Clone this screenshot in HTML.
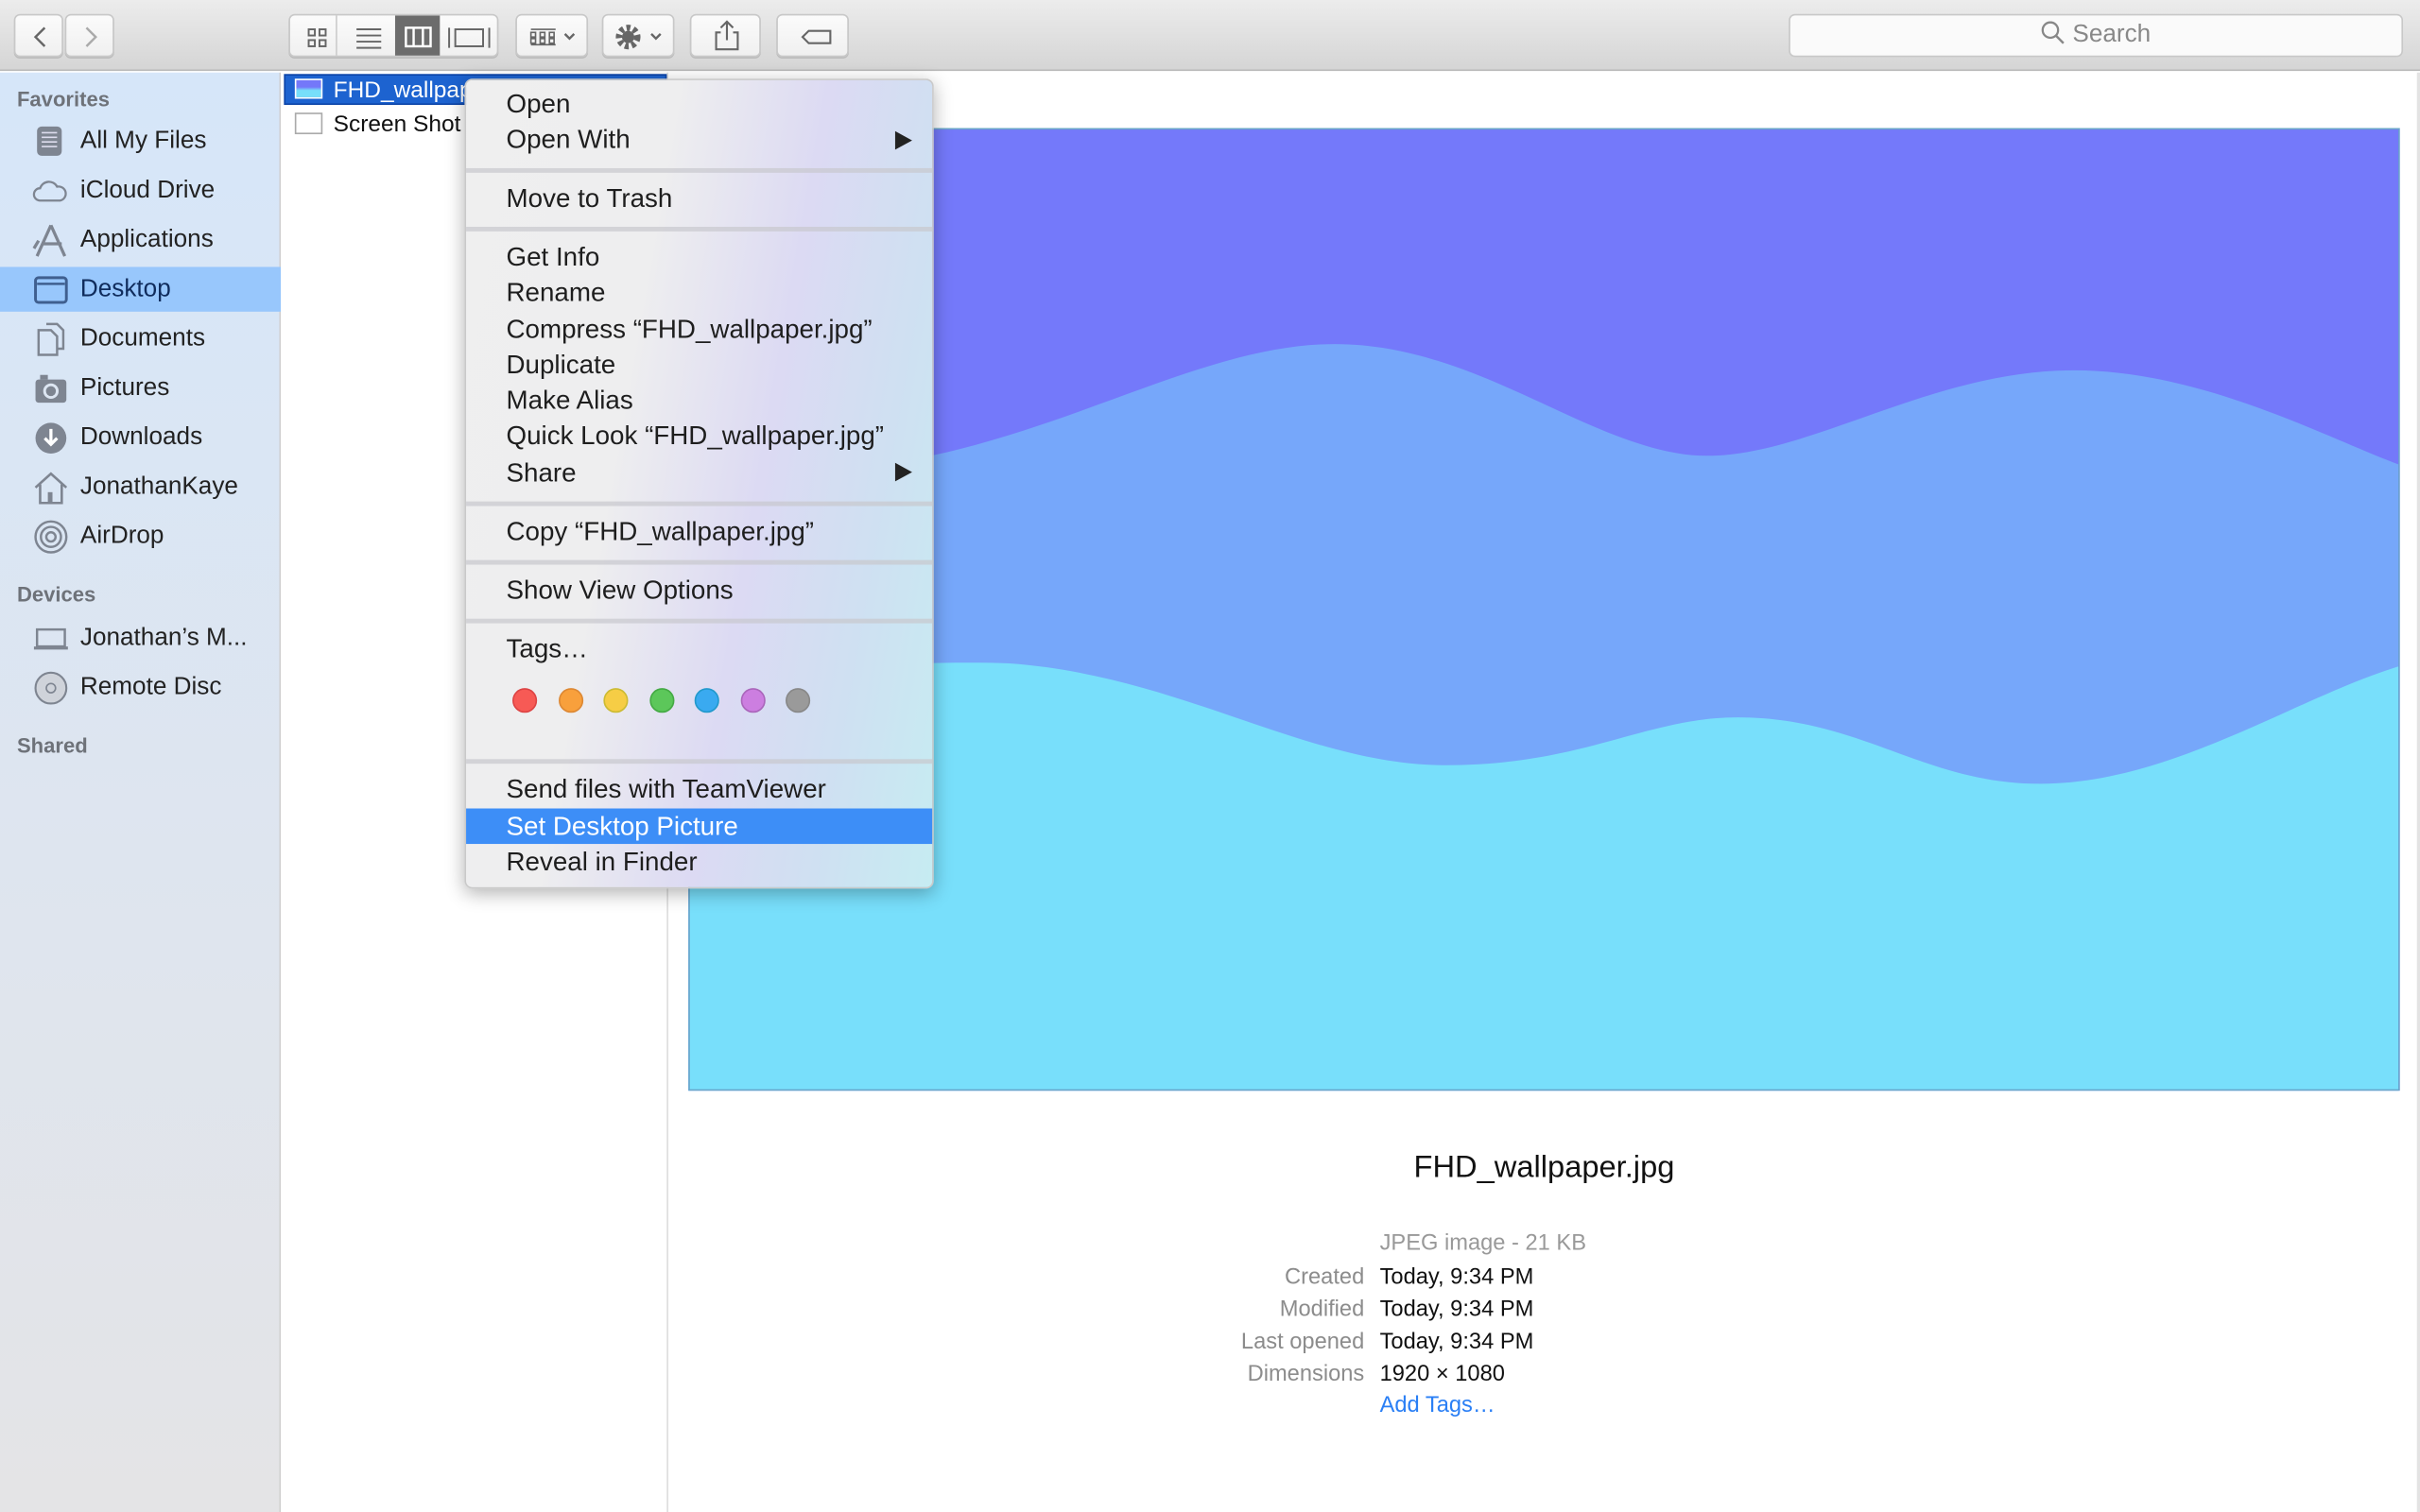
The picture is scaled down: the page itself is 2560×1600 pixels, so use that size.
<!DOCTYPE html>
<html><head><meta charset="utf-8"><style>
*{margin:0;padding:0;box-sizing:border-box}
html,body{width:2560px;height:1600px;overflow:hidden;background:#fff}
#w{width:1568px;height:980px;transform:scale(1.632653);transform-origin:0 0;position:relative;font-family:"Liberation Sans",sans-serif;color:#222}
.tb{position:absolute;left:0;top:0;width:1568px;height:46px;background:linear-gradient(#ececec,#d5d5d5);border-bottom:1px solid #b9b9b9}
.btn{position:absolute;top:9px;height:28px;background:linear-gradient(#fbfbfb,#f0f0f0);border:1px solid #c8c8c8;border-radius:4px;box-shadow:0 1px 0 #bbb}
.side{position:absolute;left:0;top:47px;width:182px;height:933px;background:linear-gradient(#d6e6f9,#dfe5ee 60%,#e4e4e6);border-right:1px solid #cfcfcf}
.sh{position:absolute;left:11px;font-size:13.5px;color:#6e7279;font-weight:bold}
.si{position:absolute;left:0;width:182px;height:29px;font-size:16px;line-height:29px;padding-left:52px;color:#222}
.si svg{position:absolute;left:21px;top:4px}
.col{position:absolute;left:182px;top:47px;width:251px;height:933px;border-right:1px solid #ddd;background:#fff}
.menu{position:absolute;left:301px;top:51px;width:304px;height:525px;border-radius:5px;background:linear-gradient(100deg,#efefef 0%,#eeeeef 35%,#dcdaf3 60%,#cfe0f2 80%,#c6ecf2 100%);box-shadow:0 3px 12px rgba(0,0,0,.3);border:1px solid #c9c9c9}
.mi{position:absolute;left:26px;font-size:17px;color:#1e1e1e;line-height:22px}
.sep{position:absolute;left:0;width:302px;height:3px;background:rgba(200,200,205,.7)}
.dot{position:absolute;top:394px;width:16px;height:16px;border-radius:50%}
.lab{position:absolute;font-size:14.5px;color:#8c8c8c;text-align:right;width:120px;left:764px}
.val{position:absolute;font-size:14.5px;color:#111;left:894px}
</style></head><body><div id="w">
<div class="tb">
 <div class="btn" style="left:9px;width:32px"><svg width="32" height="28"><path d="M19 8l-6 6 6 6" stroke="#666" stroke-width="1.5" fill="none"/></svg></div>
 <div class="btn" style="left:42px;width:32px"><svg width="32" height="28"><path d="M13 8l6 6-6 6" stroke="#aaa" stroke-width="1.5" fill="none"/></svg></div>
 <div class="btn" style="left:187px;width:136px;overflow:hidden">
  <svg width="136" height="28"><g fill="none" stroke="#666" stroke-width="1.2"><rect x="12" y="9" width="4" height="4"/><rect x="19" y="9" width="4" height="4"/><rect x="12" y="16" width="4" height="4"/><rect x="19" y="16" width="4" height="4"/><path d="M43 9h16M43 13h16M43 17h16M43 21h16"/><path d="M103 8v13M129 8v13"/><rect x="107" y="9" width="18" height="11"/></g><line x1="30" y1="0" x2="30" y2="28" stroke="#ccc"/><rect x="68" y="0" width="29" height="28" fill="#6c6c6c"/><g stroke="#fff" fill="none" stroke-width="1.5"><rect x="75" y="8" width="16" height="12"/><path d="M80 8v12M86 8v12"/></g></svg></div>
 <div class="btn" style="left:334px;width:47px"><svg width="47" height="28"><g stroke="#666" fill="none"><path d="M9 9h16M9 19h16"/><rect x="9" y="11" width="3" height="3"/><rect x="15" y="11" width="3" height="3"/><rect x="21" y="11" width="3" height="3"/><rect x="9" y="15" width="3" height="3"/><rect x="15" y="15" width="3" height="3"/><rect x="21" y="15" width="3" height="3"/><path d="M31 12l3 3 3-3" stroke-width="1.5"/></g></svg></div>
 <div class="btn" style="left:390px;width:47px"><svg width="47" height="28"><circle cx="16" cy="14" r="6" fill="none" stroke="#666" stroke-width="4" stroke-dasharray="2.5 2"/><circle cx="16" cy="14" r="4" fill="#666"/><path d="M31 12l3 3 3-3" stroke="#666" stroke-width="1.5" fill="none"/></svg></div>
 <div class="btn" style="left:447px;width:46px"><svg width="46" height="28"><path d="M19 11h-3v11h14V11h-3M23 4v12M19 8l4-4 4 4" stroke="#666" stroke-width="1.3" fill="none"/></svg></div>
 <div class="btn" style="left:503px;width:47px"><svg width="47" height="28"><path d="M16 14l4-4h14v8H20z" stroke="#666" stroke-width="1.3" fill="none"/></svg></div>
 <div class="btn" style="left:1159px;width:398px;background:#fafafa;box-shadow:none;font-size:16px;color:#888;text-align:center;line-height:26px"><svg width="16" height="16" style="vertical-align:-2px"><circle cx="6.5" cy="6.5" r="5" stroke="#888" stroke-width="1.4" fill="none"/><path d="M10 10l5 5" stroke="#888" stroke-width="1.5"/></svg> Search</div>
</div>
<div class="side">
 <div class="sh" style="top:10px">Favorites</div>
 <div class="si" style="top:30px"><svg width="24" height="22"><rect x="3" y="1" width="16" height="19" rx="3" fill="#7e8591"/><path d="M6 5h10M6 8h10M6 11h10M6 14h10" stroke="#dde" stroke-width="1"/></svg>All My Files</div>
 <div class="si" style="top:62px"><svg width="24" height="22"><path d="M5 17a4 4 0 010-8 6 6 0 0111-1 4.5 4.5 0 012 9z" fill="none" stroke="#7e8591" stroke-width="1.4"/></svg>iCloud Drive</div>
 <div class="si" style="top:94px"><svg width="24" height="22"><path d="M12 1L3 21M12 1l9 20M6 13h13M1 16l3-5" stroke="#7e8591" stroke-width="2" fill="none"/></svg>Applications</div>
 <div class="si" style="top:126px;background:#98c7fc;color:#102c5c"><svg width="24" height="22"><rect x="2" y="3" width="20" height="16" rx="2" fill="none" stroke="#3f5f8f" stroke-width="1.8"/><path d="M3 7h18" stroke="#3f5f8f" stroke-width="1.5"/></svg>Desktop</div>
 <div class="si" style="top:158px"><svg width="24" height="22"><path d="M4 5h8l4 4v12H4z M9 1h7l4 4v12h-4" fill="none" stroke="#7e8591" stroke-width="1.5"/></svg>Documents</div>
 <div class="si" style="top:190px"><svg width="24" height="22"><rect x="2" y="5" width="20" height="15" rx="2" fill="#7e8591"/><circle cx="12" cy="12.5" r="5" fill="#dde6f2"/><circle cx="12" cy="12.5" r="3.2" fill="#7e8591"/><rect x="5" y="2" width="5" height="3" fill="#7e8591"/></svg>Pictures</div>
 <div class="si" style="top:222px"><svg width="24" height="22"><circle cx="12" cy="11" r="10" fill="#7e8591"/><path d="M12 5v10M8 11l4 4 4-4" stroke="#fff" stroke-width="2" fill="none"/></svg>Downloads</div>
 <div class="si" style="top:254px"><svg width="24" height="22"><path d="M2 11L12 2l10 9M5 9v12h14V9" fill="none" stroke="#7e8591" stroke-width="1.6"/><rect x="10" y="14" width="3" height="7" fill="#7e8591"/></svg>JonathanKaye</div>
 <div class="si" style="top:286px"><svg width="24" height="22"><g fill="none" stroke="#7e8591" stroke-width="1.5"><circle cx="12" cy="11" r="10"/><circle cx="12" cy="11" r="6.5"/><circle cx="12" cy="11" r="3"/></g></svg>AirDrop</div>
 <div class="sh" style="top:331px">Devices</div>
 <div class="si" style="top:352px"><svg width="24" height="22"><rect x="3" y="5" width="18" height="11" fill="none" stroke="#7e8591" stroke-width="1.5"/><path d="M1 17h22" stroke="#7e8591" stroke-width="2"/></svg>Jonathan’s M...</div>
 <div class="si" style="top:384px"><svg width="24" height="22"><circle cx="12" cy="11" r="10" fill="#cfd3da" stroke="#7e8591" stroke-width="1.3"/><circle cx="12" cy="11" r="3" fill="none" stroke="#7e8591"/></svg>Remote Disc</div>
 <div class="sh" style="top:429px">Shared</div>
</div>
<div class="col">
 <div style="position:absolute;left:2px;top:1px;width:248px;height:20px;background:#1d63d0;border:1px solid #0d45a8"></div>
 <div style="position:absolute;left:9px;top:4px;width:18px;height:13px;background:linear-gradient(#7478f9 40%,#77dffa 60%);border:1px solid #fff"></div>
 <div style="position:absolute;left:34px;top:3px;font-size:15px;color:#fff">FHD_wallpaper.jpg</div>
 <div style="position:absolute;left:9px;top:26px;width:18px;height:14px;border:1px solid #aaa;background:#fff"></div>
 <div style="position:absolute;left:34px;top:25px;font-size:15px;color:#111">Screen Shot</div>
</div>
<svg style="position:absolute;left:446px;top:83px" width="1109" height="624" viewBox="0 0 1109 624">
 <rect width="1109" height="624" fill="#7479fa"/>
 <path d="M0 250C60 235 110 215 159 212C260 190 340 140 419 140C510 140 580 205 650 212C720 218 800 157 898 157C980 157 1060 200 1108 218V624H0Z" fill="#76a7fa"/>
 <path d="M0 350C100 350 160 345 208 347C320 355 400 413 491 413C580 413 620 382 680 382C760 382 800 425 876 425C960 425 1040 370 1108 349V624H0Z" fill="#78dffb"/>
 <rect x=".5" y=".5" width="1108" height="623" fill="none" stroke="#6aa5c8"/>
</svg>
<div class="menu">
 <div class="mi" style="top:5px">Open</div>
 <div class="mi" style="top:28px">Open With</div>
 <div style="position:absolute;left:278px;top:33px;border-left:11px solid #222;border-top:6px solid transparent;border-bottom:6px solid transparent"></div>
 <div class="sep" style="top:57px"></div>
 <div class="mi" style="top:66px">Move to Trash</div>
 <div class="sep" style="top:95px"></div>
 <div class="mi" style="top:104px">Get Info</div>
 <div class="mi" style="top:127px">Rename</div>
 <div class="mi" style="top:151px">Compress “FHD_wallpaper.jpg”</div>
 <div class="mi" style="top:174px">Duplicate</div>
 <div class="mi" style="top:197px">Make Alias</div>
 <div class="mi" style="top:220px">Quick Look “FHD_wallpaper.jpg”</div>
 <div class="mi" style="top:244px">Share</div>
 <div style="position:absolute;left:278px;top:248px;border-left:11px solid #222;border-top:6px solid transparent;border-bottom:6px solid transparent"></div>
 <div class="sep" style="top:273px"></div>
 <div class="mi" style="top:282px">Copy “FHD_wallpaper.jpg”</div>
 <div class="sep" style="top:311px"></div>
 <div class="mi" style="top:320px">Show View Options</div>
 <div class="sep" style="top:349px"></div>
 <div class="mi" style="top:358px">Tags…</div>
 <div class="dot" style="left:30px;background:#f75a55;border:1px solid #d44"></div>
 <div class="dot" style="left:60px;background:#f8a03c;border:1px solid #d83"></div>
 <div class="dot" style="left:89px;background:#f6cd45;border:1px solid #cb3"></div>
 <div class="dot" style="left:119px;background:#5cc75a;border:1px solid #4a4"></div>
 <div class="dot" style="left:148px;background:#3aaaf0;border:1px solid #29c"></div>
 <div class="dot" style="left:178px;background:#cc7ee0;border:1px solid #a6b"></div>
 <div class="dot" style="left:207px;background:#9a9a9a;border:1px solid #888"></div>
 <div class="sep" style="top:440px"></div>
 <div class="mi" style="top:449px">Send files with TeamViewer</div>
 <div style="position:absolute;left:0;top:472px;width:302px;height:23px;background:#3d8ef7"></div>
 <div class="mi" style="top:473px;color:#fff">Set Desktop Picture</div>
 <div class="mi" style="top:496px">Reveal in Finder</div>
</div>
<div style="position:absolute;left:446px;top:746px;width:1109px;text-align:center;font-size:20px;color:#111">FHD_wallpaper.jpg</div>
<div style="position:absolute;left:894px;top:798px;font-size:14.5px;color:#999">JPEG image - 21 KB</div>
<div class="lab" style="top:820px">Created</div><div class="val" style="top:820px">Today, 9:34 PM</div>
<div class="lab" style="top:841px">Modified</div><div class="val" style="top:841px">Today, 9:34 PM</div>
<div class="lab" style="top:862px">Last opened</div><div class="val" style="top:862px">Today, 9:34 PM</div>
<div class="lab" style="top:883px">Dimensions</div><div class="val" style="top:883px">1920 × 1080</div>
<div class="val" style="top:903px;color:#2a7ff5">Add Tags…</div>
<div style="position:absolute;left:1566px;top:47px;width:2px;height:933px;background:#e3e3e3"></div>
</div></body></html>
